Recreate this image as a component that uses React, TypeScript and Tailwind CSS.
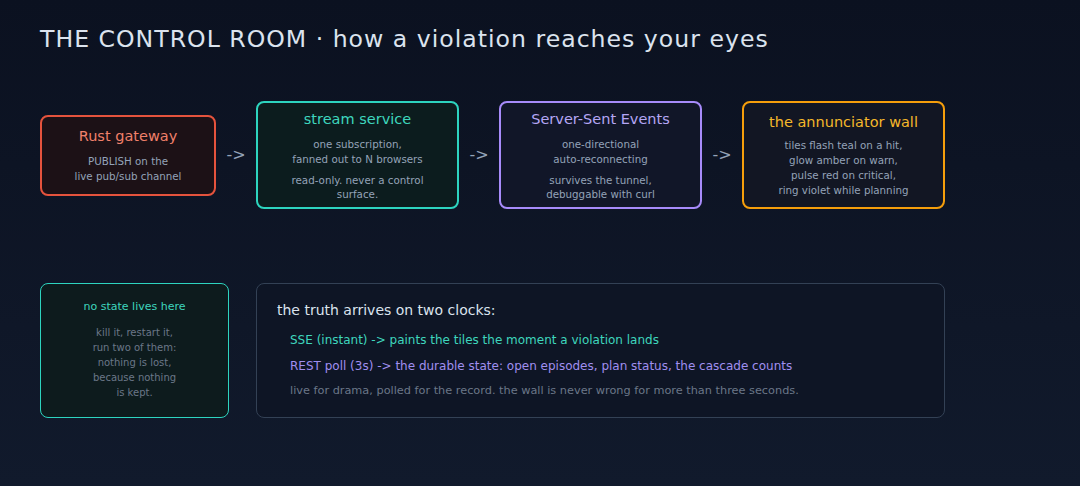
export default function App() {
  const font = { fontFamily: '"DejaVu Sans", sans-serif' };
  const Arrow = () => (
    <div className="flex w-10 justify-center text-[16px] text-[#94a3b8]">-&gt;</div>
  );
  return (
    <div
      style={font}
      className="h-[486px] w-[1080px] bg-gradient-to-b from-[#0b1120] to-[#111a2c] px-10 pt-[24px] text-[#cbd5e1]"
    >
      <h1 className="text-[23.6px] leading-[30px] tracking-[1px] text-[#dbe3ee]">
        THE CONTROL ROOM · how a violation reaches your eyes
      </h1>

      <div className="mt-[47px] flex items-center">
        <div className="flex h-[81px] w-[176px] flex-col items-center justify-center rounded-lg border-2 border-[#e5533d] bg-[#1c1116] text-center">
          <div className="text-[14.5px] text-[#f0806a]">Rust gateway</div>
          <div className="mt-[6px] text-[10.3px] leading-[15px] text-[#94a3b8]">
            PUBLISH on the
            <br />
            live pub/sub channel
          </div>
        </div>
        <Arrow />
        <div className="flex h-[108px] w-[203px] flex-col items-center justify-center rounded-lg border-2 border-[#2dd4bf] bg-[#0c1c1e] text-center">
          <div className="text-[14.5px] text-[#3ed6bd]">stream service</div>
          <div className="mt-[6px] text-[10.3px] leading-[15px] text-[#94a3b8]">
            one subscription,
            <br />
            fanned out to N browsers
          </div>
          <div className="mt-[6px] text-[10.3px] leading-[14px] text-[#94a3b8]">
            read-only. never a control
            <br />
            surface.
          </div>
        </div>
        <Arrow />
        <div className="flex h-[108px] w-[203px] flex-col items-center justify-center rounded-lg border-2 border-[#a78bfa] bg-[#111628] text-center">
          <div className="text-[14.5px] text-[#b5a6f5]">Server-Sent Events</div>
          <div className="mt-[6px] text-[10.3px] leading-[15px] text-[#94a3b8]">
            one-directional
            <br />
            auto-reconnecting
          </div>
          <div className="mt-[6px] text-[10.3px] leading-[14px] text-[#94a3b8]">
            survives the tunnel,
            <br />
            debuggable with curl
          </div>
        </div>
        <Arrow />
        <div className="flex h-[108px] w-[203px] flex-col items-center justify-center rounded-lg border-2 border-[#f59e0b] bg-[#121623] text-center">
          <div className="text-[14.5px] text-[#f5b82a]">the annunciator wall</div>
          <div className="mt-[5px] text-[10.3px] leading-[15px] text-[#94a3b8]">
            tiles flash teal on a hit,
            <br />
            glow amber on warn,
            <br />
            pulse red on critical,
            <br />
            ring violet while planning
          </div>
        </div>
      </div>

      <div className="mt-[74px] flex gap-[27px]">
        <div className="flex h-[135px] w-[189px] flex-col items-center rounded-lg border border-[#2dd4bf] bg-[#0d1b1d] pt-[15px] text-center">
          <div className="text-[11px] text-[#3ed6bd]">no state lives here</div>
          <div className="mt-[9px] text-[10px] leading-[15px] text-[#6b7788]">
            kill it, restart it,
            <br />
            run two of them:
            <br />
            nothing is lost,
            <br />
            because nothing
            <br />
            is kept.
          </div>
        </div>
        <div className="h-[135px] w-[689px] rounded-lg border border-[#334155] bg-[#0e1525] pl-5 pt-[16px]">
          <div className="text-[14px] leading-[20px] text-[#dbe3ee]">the truth arrives on two clocks:</div>
          <div className="mt-[11px] pl-[13px] text-[12px] leading-[18px] text-[#3ed6bd]">
            SSE (instant) -&gt; paints the tiles the moment a violation lands
          </div>
          <div className="mt-[8px] pl-[13px] text-[12px] leading-[18px] text-[#a08ff0]">
            REST poll (3s) -&gt; the durable state: open episodes, plan status, the cascade counts
          </div>
          <div className="mt-[8px] pl-[13px] text-[11.3px] leading-[16px] text-[#6b7788]">
            live for drama, polled for the record. the wall is never wrong for more than three seconds.
          </div>
        </div>
      </div>
    </div>
  );
}
